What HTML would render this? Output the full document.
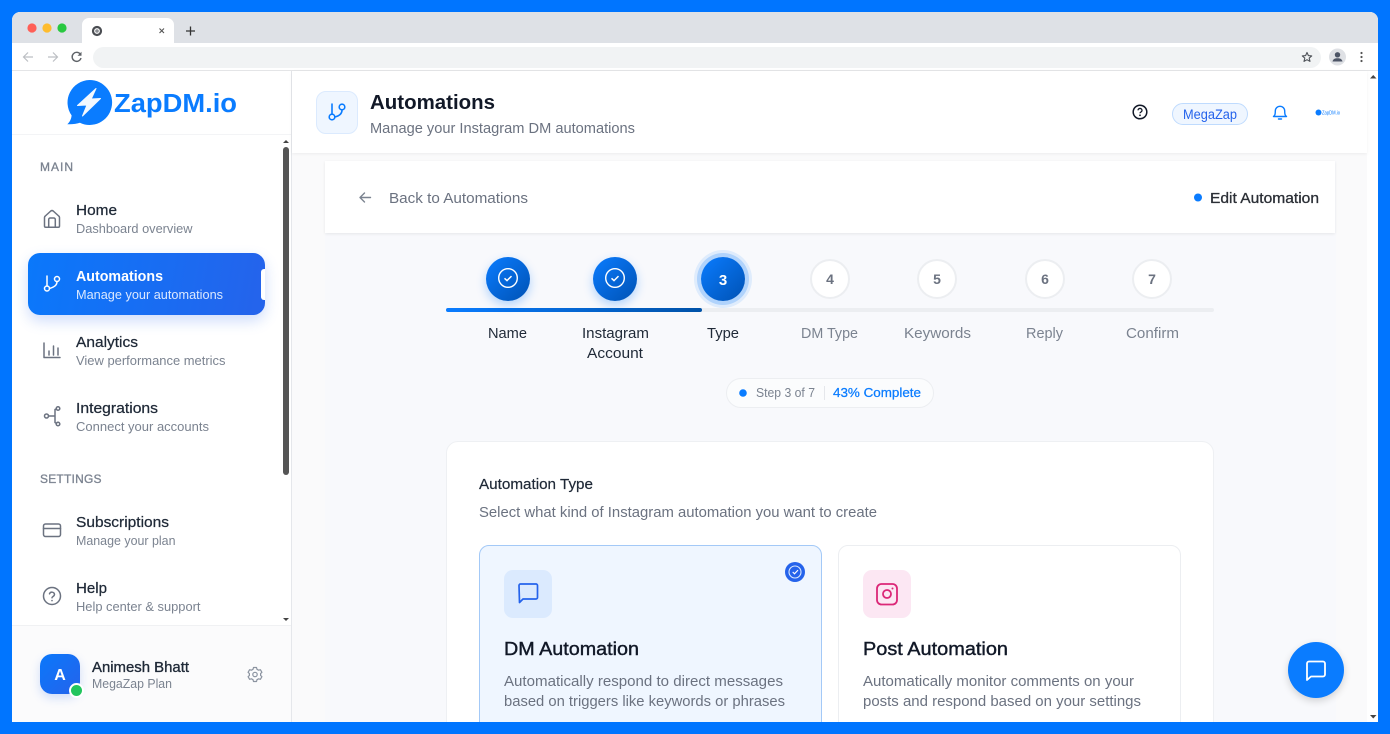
<!DOCTYPE html>
<html><head><meta charset="utf-8"><title>Automations</title>
<style>
html,body{margin:0;padding:0;width:1390px;height:734px;overflow:hidden;background:#0075ff}
.b{position:absolute;box-sizing:border-box}
svg{position:absolute;left:0;top:0}
text{font-family:"Liberation Sans",sans-serif}
.n{font-size:15px;fill:#1f2937;stroke:#1f2937;stroke-width:.25}
.s{font-size:12.5px;fill:#7b8390}
.g{font-size:14.5px;fill:#6b7280}
.i{fill:none;stroke:#6b7280;stroke-width:1.5;stroke-linecap:round;stroke-linejoin:round}
</style></head><body>
<div class="b" style="left:12px;top:12px;width:1366px;height:710px;background:#fff;border-radius:8px 8px 0 0;overflow:hidden">
  <div class="b" style="left:0;top:0;width:1366px;height:31px;background:#dee1e6"></div>
  <div class="b" style="left:70px;top:6px;width:92px;height:26px;background:#fff;border-radius:7px 7px 0 0"></div>
  <div class="b" style="left:81px;top:34.500px;width:1228px;height:21px;background:#f1f3f4;border-radius:11px"></div>
  <div class="b" style="left:0;top:58px;width:1366px;height:1px;background:#e4e5e7"></div>
  <!-- sidebar -->
  <div class="b" style="left:279px;top:59px;width:1px;height:651px;background:#e5e7eb"></div>
  <div class="b" style="left:0;top:122px;width:279px;height:1px;background:#f3f4f6"></div>
  <div class="b" style="left:0;top:613px;width:279px;height:97px;background:#fbfbfc;border-top:1px solid #f0f1f3"></div>
  <div class="b" style="left:271px;top:135px;width:6px;height:328px;background:#555;border-radius:3px"></div>
  <div class="b" style="left:16px;top:241px;width:237px;height:62px;border-radius:12px;background:linear-gradient(100deg,#0a78fb,#2563eb);box-shadow:0 6px 14px rgba(37,99,235,.22);overflow:hidden"></div>
  <div class="b" style="left:249px;top:257px;width:4px;height:31px;background:#fff;border-radius:3px 0 0 3px"></div>
  <div class="b" style="left:28px;top:642px;width:40px;height:40px;border-radius:12px;background:linear-gradient(135deg,#0a78fb,#2563eb);box-shadow:0 4px 10px rgba(37,99,235,.2)"></div>
  <div class="b" style="left:56.500px;top:670.500px;width:15px;height:15px;border-radius:50%;background:#22c55e;border:2px solid #fff"></div>
  <!-- main -->
  <div class="b" style="left:280px;top:59px;width:1075px;height:651px;background:#fafafb"></div>
  <div class="b" style="left:280px;top:59px;width:1075px;height:82px;background:#fff;box-shadow:0 1px 3px rgba(0,0,0,.06)"></div>
  <div class="b" style="left:313px;top:149px;width:1011px;height:561px;background:#f8f9fc"></div>
  <div class="b" style="left:313px;top:149px;width:1010px;height:72px;background:#fff;box-shadow:0 1px 3px rgba(0,0,0,.08)"></div>
  <div class="b" style="left:304px;top:79px;width:42px;height:43px;border-radius:10px;background:#eff6ff;border:1px solid #dbeafe"></div>
  <div class="b" style="left:1160px;top:91px;width:76px;height:22px;border-radius:11px;background:#eff6ff;border:1px solid #bfdbfe"></div>
  <!-- stepper -->
  <div class="b" style="left:434px;top:296px;width:768px;height:4px;border-radius:2px;background:#eceef1"></div>
  <div class="b" style="left:434px;top:296px;width:256px;height:4px;border-radius:2px;background:linear-gradient(90deg,#0a7cff,#0052a8)"></div>
  <div class="b" style="left:474px;top:245px;width:44px;height:44px;border-radius:50%;background:linear-gradient(135deg,#0a7cff,#0052b4);box-shadow:0 4px 10px rgba(10,124,255,.3)"></div>
  <div class="b" style="left:581px;top:245px;width:44px;height:44px;border-radius:50%;background:linear-gradient(135deg,#0a7cff,#0052b4);box-shadow:0 4px 10px rgba(10,124,255,.3)"></div>
  <div class="b" style="left:689px;top:245px;width:44px;height:44px;border-radius:50%;background:linear-gradient(135deg,#0a7cff,#0052b4);box-shadow:0 0 0 4px rgba(10,124,255,.22),0 0 0 7px rgba(10,124,255,.1)"></div>
  <div class="b" style="left:798px;top:247px;width:40px;height:40px;border-radius:50%;background:#fff;border:2px solid #eceef1"></div>
  <div class="b" style="left:905px;top:247px;width:40px;height:40px;border-radius:50%;background:#fff;border:2px solid #eceef1"></div>
  <div class="b" style="left:1013px;top:247px;width:40px;height:40px;border-radius:50%;background:#fff;border:2px solid #eceef1"></div>
  <div class="b" style="left:1120px;top:247px;width:40px;height:40px;border-radius:50%;background:#fff;border:2px solid #eceef1"></div>
  <div class="b" style="left:714px;top:366px;width:208px;height:30px;border-radius:15px;background:#fbfcfd;border:1px solid #eceef1"></div>
  <div class="b" style="left:812px;top:374px;width:1px;height:14px;background:#e5e7eb"></div>
  <!-- cards -->
  <div class="b" style="left:434px;top:429px;width:768px;height:300px;background:#fff;border:1px solid #eef0f3;border-radius:12px"></div>
  <div class="b" style="left:467px;top:533px;width:343px;height:200px;background:#eff6ff;border:1px solid #a3c9f7;border-radius:10px"></div>
  <div class="b" style="left:826px;top:533px;width:343px;height:200px;background:#fff;border:1px solid #eceef1;border-radius:10px"></div>
  <div class="b" style="left:492px;top:558px;width:48px;height:48px;background:#dbeafe;border-radius:9px"></div>
  <div class="b" style="left:851px;top:558px;width:48px;height:48px;background:#fce7f3;border-radius:9px"></div>
  <div class="b" style="left:773px;top:550px;width:20px;height:20px;background:#2563eb;border-radius:50%"></div>
  <div class="b" style="left:1276px;top:630px;width:56px;height:56px;background:#0a7cff;border-radius:50%;box-shadow:0 3px 8px rgba(0,0,0,.16)"></div>
</div>
<svg width="1390" height="734" viewBox="0 0 1390 734" xmlns="http://www.w3.org/2000/svg">
  <!-- browser chrome -->
  <circle cx="32" cy="28" r="4.600" fill="#ff5f57"/><circle cx="47" cy="28" r="4.600" fill="#febc2e"/><circle cx="62" cy="28" r="4.600" fill="#28c840"/>
  <circle cx="97" cy="31" r="4" fill="none" stroke="#4a4d52" stroke-width="2.200"/><circle cx="97" cy="31" r="1.800" fill="#8a8d92"/>
  <path d="M159.500 28.500l4.500 4.500M164 28.500l-4.500 4.500" stroke="#555" stroke-width="1.100"/>
  <path d="M186 31h9M190.500 26.500v9" stroke="#333" stroke-width="1.300"/>
  <path d="M33 57H24M28 52.500L23.500 57l4.500 4.500" fill="none" stroke="#bcbfc3" stroke-width="1.200"/>
  <path d="M48 57h9M53 52.500l4.500 4.500-4.500 4.500" fill="none" stroke="#bcbfc3" stroke-width="1.200"/>
  <path d="M80.500 54.500A4.500 4.500 0 1 0 81 58" fill="none" stroke="#5f6368" stroke-width="1.400"/><path d="M81.500 51.800v4h-4z" fill="#5f6368"/>
  <path d="M1307 52.500l1.400 3.100 3.300.3-2.500 2.200.8 3.300-3-1.700-3 1.700.8-3.300-2.500-2.200 3.300-.3z" fill="none" stroke="#50545a" stroke-width="1.100" stroke-linejoin="round"/>
  <circle cx="1337.500" cy="57" r="8.500" fill="#dfe1e5"/><circle cx="1337.500" cy="54.800" r="2.700" fill="#4d5566"/><path d="M1332.500 61.500c.5-2.600 2.500-3.300 5-3.300s4.500.7 5 3.300z" fill="#4d5566"/>
  <circle cx="1361.500" cy="53" r="1.100" fill="#555"/><circle cx="1361.500" cy="57" r="1.100" fill="#555"/><circle cx="1361.500" cy="61" r="1.100" fill="#555"/>
  <!-- scroll arrows -->
  <path d="M283 143h6l-3-3z" fill="#444"/><path d="M283 618h6l-3 3z" fill="#444"/>
  <path d="M1370 78.500h6.500l-3.250-3.500z" fill="#444"/><path d="M1370 715h6.500l-3.250 3.500z" fill="#444"/>
  <!-- logo -->
  <path d="M89.500 80a22.500 22.500 0 1 1-9.600 42.800c-3.500 1.300-8.200 1.600-12.600 1.400 2.600-2.200 4-5.200 4.300-8.800A22.500 22.500 0 0 1 89.500 80z" fill="#0a7cff"/>
  <path d="M96 88.500L77.500 105.500l9.500-.5-4.500 11 18-17.500-9.300.5z" fill="#f3f8ff" stroke="#f3f8ff" stroke-width="1" stroke-linejoin="round"/>
  <text x="114" y="112" font-size="25.500" font-weight="700" fill="#0a7cff" textLength="123" lengthAdjust="spacingAndGlyphs">ZapDM.io</text>
  <!-- sidebar text -->
  <text x="40" y="171" font-size="12" fill="#7b8390" stroke="#7b8390" stroke-width=".3" textLength="33" lengthAdjust="spacing">MAIN</text>
  <text x="40" y="483" font-size="12" fill="#7b8390" stroke="#7b8390" stroke-width=".3" textLength="61.500" lengthAdjust="spacing">SETTINGS</text>
  <text class="n" x="76" y="215" textLength="41" lengthAdjust="spacingAndGlyphs">Home</text>
  <text class="s" x="76" y="233" textLength="116.500" lengthAdjust="spacingAndGlyphs">Dashboard overview</text>
  <text x="76" y="281" font-size="15" font-weight="700" fill="#fff" textLength="87" lengthAdjust="spacingAndGlyphs">Automations</text>
  <text x="76" y="299" font-size="12.500" fill="#dbe8fe" textLength="147" lengthAdjust="spacingAndGlyphs">Manage your automations</text>
  <text class="n" x="76" y="347" textLength="62" lengthAdjust="spacingAndGlyphs">Analytics</text>
  <text class="s" x="76" y="365" textLength="149.500" lengthAdjust="spacingAndGlyphs">View performance metrics</text>
  <text class="n" x="76" y="413" textLength="82" lengthAdjust="spacingAndGlyphs">Integrations</text>
  <text class="s" x="76" y="431" textLength="133" lengthAdjust="spacingAndGlyphs">Connect your accounts</text>
  <text class="n" x="76" y="527" textLength="93" lengthAdjust="spacingAndGlyphs">Subscriptions</text>
  <text class="s" x="76" y="545" textLength="99.500" lengthAdjust="spacingAndGlyphs">Manage your plan</text>
  <text class="n" x="76" y="593" textLength="31" lengthAdjust="spacingAndGlyphs">Help</text>
  <text class="s" x="76" y="611" textLength="124.500" lengthAdjust="spacingAndGlyphs">Help center &amp; support</text>
  <text x="92" y="672" font-size="14.500" fill="#1f2937" stroke="#1f2937" stroke-width=".35" textLength="97" lengthAdjust="spacingAndGlyphs">Animesh Bhatt</text>
  <text x="92" y="688" font-size="12.500" fill="#7b8390" textLength="80" lengthAdjust="spacingAndGlyphs">MegaZap Plan</text>
  <text x="60" y="680" font-size="16" font-weight="700" fill="#fff" text-anchor="middle">A</text>
  <!-- sidebar icons -->
  <path class="i" d="M44.500 226v-8.500a2 2 0 0 1 .8-1.500l5.500-5a2 2 0 0 1 2.400 0l5.500 5a2 2 0 0 1 .8 1.500V226a1.200 1.200 0 0 1-1.200 1.200H45.700a1.200 1.200 0 0 1-1.200-1.200z"/><path class="i" d="M48.700 227v-7.500a1.500 1.500 0 0 1 1.500-1.500h3.600a1.500 1.500 0 0 1 1.500 1.500v7.500"/>
  <g fill="none" stroke="#fff" stroke-width="1.500" stroke-linecap="round"><circle cx="47" cy="288.500" r="2.500"/><circle cx="57" cy="279" r="2.500"/><path d="M47 286v-10M57 281.500c0 4-3 5.500-7.500 7"/></g>
  <path class="i" d="M44 343v14.500h16M49 355v-4M53.500 355v-9M58 355v-7"/>
  <g class="i"><circle cx="46.500" cy="416" r="2"/><circle cx="58" cy="408.500" r="1.800"/><circle cx="58" cy="424" r="1.800"/><path d="M48.500 416h6M55 416v-6.500l1.500-.5M55 416v6.500l1.500 1"/></g>
  <rect class="i" x="43.500" y="524" width="17" height="12.500" rx="2"/><path class="i" d="M43.500 528.500h17"/>
  <circle class="i" cx="52" cy="596" r="8.500"/><path class="i" d="M49.500 593.800a2.600 2.600 0 0 1 5 .7c0 1.700-2.500 2.100-2.500 3.200"/><path d="M52 600.500v.1" stroke="#6b7280" stroke-width="1.600" stroke-linecap="round"/>
  <g fill="none" stroke="#8b93a0" stroke-width="1.200" stroke-linejoin="round"><circle cx="255" cy="674.500" r="2.200"/><path d="M253.500 668h3l.5 1.800 1.600.9 1.800-.5 1.500 2.600-1.300 1.300v1.800l1.300 1.300-1.500 2.600-1.800-.5-1.600.9-.5 1.800h-3l-.5-1.800-1.600-.9-1.800.5-1.500-2.600 1.300-1.300v-1.800l-1.300-1.300 1.500-2.600 1.800.5 1.600-.9z" transform="translate(0 -.5)"/></g>
  <!-- header -->
  <g fill="none" stroke="#0a7cff" stroke-width="1.600" stroke-linecap="round"><circle cx="332" cy="117" r="2.800"/><circle cx="342" cy="107" r="2.800"/><path d="M332 114v-10M342 110c0 4-3 6-7.200 7"/></g>
  <text x="370" y="109" font-size="20.500" font-weight="700" fill="#111827" textLength="125" lengthAdjust="spacingAndGlyphs">Automations</text>
  <text x="370" y="133" class="g" textLength="265" lengthAdjust="spacingAndGlyphs">Manage your Instagram DM automations</text>
  <circle cx="1140" cy="112" r="6.800" fill="none" stroke="#111827" stroke-width="1.500"/>
  <path d="M1138 110.300a2 2 0 0 1 4 .3c0 1.300-2 1.500-2 2.700" fill="none" stroke="#111827" stroke-width="1.300"/><circle cx="1140" cy="115.300" r=".9" fill="#111827"/>
  <text x="1183" y="119" font-size="13.500" fill="#2563eb" textLength="54" lengthAdjust="spacingAndGlyphs">MegaZap</text>
  <path d="M1273.500 116.500c1.500-1.100 1.800-2.300 1.800-5.500a4.700 4.700 0 0 1 9.400 0c0 3.200.3 4.400 1.800 5.500z M1278.500 119h3" fill="none" stroke="#0a7cff" stroke-width="1.400" stroke-linejoin="round" stroke-linecap="round"/>
  <circle cx="1318.500" cy="112.500" r="3" fill="#0a7cff"/>
  <text x="1322" y="114.500" font-size="5.500" fill="#0a7cff" textLength="18" lengthAdjust="spacingAndGlyphs">ZapDM.io</text>
  <!-- back bar -->
  <path d="M370.500 197.500h-10M364.500 193l-4.500 4.500 4.500 4.500" fill="none" stroke="#7b8390" stroke-width="1.400" stroke-linecap="round" stroke-linejoin="round"/>
  <text x="389" y="203" class="g" fill="#6b7280" textLength="139" lengthAdjust="spacingAndGlyphs">Back to Automations</text>
  <circle cx="1198" cy="197.500" r="4" fill="#0a7cff"/>
  <text x="1210" y="203" font-size="14.500" fill="#2b2f36" stroke="#2b2f36" stroke-width=".3" textLength="109" lengthAdjust="spacingAndGlyphs">Edit Automation</text>
  <!-- steps -->
  <g fill="none" stroke="#fff"><circle cx="508" cy="278" r="9.300" stroke-width="1.400"/><path d="M504.500 278.300l2.500 2.300 4.500-4.500" stroke-width="1.500"/><circle cx="615" cy="278" r="9.300" stroke-width="1.400"/><path d="M611.500 278.300l2.500 2.300 4.500-4.500" stroke-width="1.500"/></g>
  <g text-anchor="middle" font-weight="700">
    <text x="723" y="285" font-size="15" fill="#fff">3</text>
    <text x="830" y="284" font-size="14" fill="#6b7280">4</text>
    <text x="937" y="284" font-size="14" fill="#6b7280">5</text>
    <text x="1045" y="284" font-size="14" fill="#6b7280">6</text>
    <text x="1152" y="284" font-size="14" fill="#6b7280">7</text>
  </g>
  <g font-size="14.500" fill="#1f2937">
    <text x="488" y="338" textLength="39" lengthAdjust="spacingAndGlyphs">Name</text>
    <text x="582" y="338" textLength="67" lengthAdjust="spacingAndGlyphs">Instagram</text>
    <text x="587" y="358" textLength="56" lengthAdjust="spacingAndGlyphs">Account</text>
    <text x="707" y="338" textLength="32" lengthAdjust="spacingAndGlyphs">Type</text>
  </g>
  <g font-size="14.500" fill="#7b8390">
    <text x="801" y="338" textLength="57" lengthAdjust="spacingAndGlyphs">DM Type</text>
    <text x="904" y="338" textLength="67" lengthAdjust="spacingAndGlyphs">Keywords</text>
    <text x="1026" y="338" textLength="37" lengthAdjust="spacingAndGlyphs">Reply</text>
    <text x="1126" y="338" textLength="53" lengthAdjust="spacingAndGlyphs">Confirm</text>
  </g>
  <circle cx="743" cy="393" r="3.800" fill="#0a7cff"/>
  <text x="756" y="397" font-size="12.500" fill="#7b8390" textLength="59" lengthAdjust="spacingAndGlyphs">Step 3 of 7</text>
  <text x="833" y="397" font-size="12.500" fill="#0a7cff" stroke="#0a7cff" stroke-width=".25" textLength="88" lengthAdjust="spacingAndGlyphs">43% Complete</text>
  <!-- card text -->
  <text x="479" y="489" font-size="14.500" fill="#1f2937" stroke="#1f2937" stroke-width=".2" textLength="114" lengthAdjust="spacingAndGlyphs">Automation Type</text>
  <text x="479" y="517" class="g" textLength="398" lengthAdjust="spacingAndGlyphs">Select what kind of Instagram automation you want to create</text>
  <text x="504" y="655" font-size="18.500" fill="#111827" stroke="#111827" stroke-width=".4" textLength="135" lengthAdjust="spacingAndGlyphs">DM Automation</text>
  <text x="504" y="686" class="g" textLength="279" lengthAdjust="spacingAndGlyphs">Automatically respond to direct messages</text>
  <text x="504" y="706" class="g" textLength="281" lengthAdjust="spacingAndGlyphs">based on triggers like keywords or phrases</text>
  <text x="863" y="655" font-size="18.500" fill="#111827" stroke="#111827" stroke-width=".4" textLength="145" lengthAdjust="spacingAndGlyphs">Post Automation</text>
  <text x="863" y="686" class="g" textLength="271" lengthAdjust="spacingAndGlyphs">Automatically monitor comments on your</text>
  <text x="863" y="706" class="g" textLength="278" lengthAdjust="spacingAndGlyphs">posts and respond based on your settings</text>
  <!-- card icons -->
  <path d="M519 585.500a1.500 1.500 0 0 1 1.500-1.500h15.500a1.500 1.500 0 0 1 1.500 1.500v12a1.500 1.500 0 0 1-1.500 1.500h-13l-3.500 3.500z" fill="none" stroke="#2563eb" stroke-width="1.700" stroke-linejoin="round"/>
  <circle cx="795" cy="572" r="6" fill="none" stroke="#dbeafe" stroke-width="1.100"/><path d="M792.700 572l1.800 1.800 3.500-3.700" fill="none" stroke="#fff" stroke-width="1.100"/>
  <rect x="877" y="584" width="20" height="20.500" rx="4.500" fill="none" stroke="#db2777" stroke-width="1.800"/>
  <circle cx="887" cy="594" r="4" fill="none" stroke="#db2777" stroke-width="1.800"/><circle cx="892.500" cy="588.500" r="1" fill="#db2777"/>
  <path d="M1307 671.500v-8a2 2 0 0 1 2-2h14a2 2 0 0 1 2 2v11a2 2 0 0 1-2 2h-12l-4 3.500z" fill="none" stroke="#fff" stroke-width="1.800" stroke-linejoin="round"/>
</svg>
</body></html>
